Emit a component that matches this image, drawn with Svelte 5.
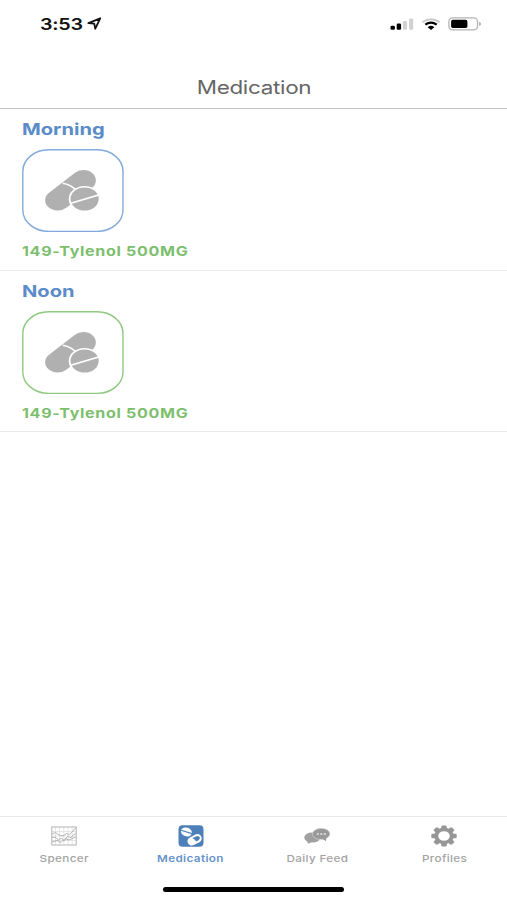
<script lang="ts">
  const medications = [
    { time: 'Morning', name: '149-Tylenol 500MG', status: 'due' },
    { time: 'Noon', name: '149-Tylenol 500MG', status: 'taken' }
  ];

  const tabs = [
    { id: 'spencer', label: 'Spencer' },
    { id: 'medication', label: 'Medication' },
    { id: 'feed', label: 'Daily Feed' },
    { id: 'profiles', label: 'Profiles' }
  ];

  let activeTab = $state('medication');
</script>

<div class="screen">
  <div class="status-bar">
    <div class="clock">
      <span class="time"><span class="wide">3:53</span></span>
      <svg class="location" viewBox="0 0 15 13">
        <path d="M1.4 6.2L13.2 1.3L8.3 11.7L7.2 6.6Z" fill="none" stroke="#111" stroke-width="1.8" stroke-linejoin="round" />
      </svg>
    </div>
    <div class="indicators">
      <svg class="signal" viewBox="0 0 24 12">
        <rect x="0.5" y="7.7" width="4.4" height="4.1" rx="1.3" fill="#000" />
        <rect x="6.7" y="5.5" width="4.4" height="6.3" rx="1.3" fill="#000" />
        <rect x="12.9" y="3" width="4.2" height="8.8" rx="1.2" fill="#d2d2d2" />
        <rect x="19" y="0.6" width="4.2" height="11.2" rx="1.2" fill="#d2d2d2" />
      </svg>
      <svg class="wifi" viewBox="0 0 20 12">
        <path d="M1.4 4.3Q10 -1.9 18.6 4.3" fill="none" stroke="#ccc" stroke-width="2" />
        <path d="M4.3 6.7Q10 2.4 15.7 6.7" fill="none" stroke="#000" stroke-width="2.2" />
        <path d="M6.7 9.2Q10 6.5 13.3 9.2L10 11.9Z" fill="#000" />
      </svg>
      <svg class="battery" viewBox="0 0 34 14">
        <rect x="0.9" y="0.9" width="28.6" height="12" rx="3.6" fill="none" stroke="#b4b4b4" stroke-width="1.3" />
        <rect x="3.1" y="2.7" width="16.3" height="8.4" rx="1.8" fill="#000" />
        <path d="M31.2 4.8Q33 5.6 33 6.9Q33 8.2 31.2 9Z" fill="#aaa" />
      </svg>
    </div>
  </div>

  <header class="header">
    <h1><span class="wide">Medication</span></h1>
  </header>

  <main class="content">
    {#each medications as med}
      <section class="slot">
        <h2><span class="wide">{med.time}</span></h2>
        <div class="pill-card">
          <svg class="outline" class:taken={med.status === 'taken'} viewBox="0 0 102 83">
            <rect x="0.8" y="0.8" width="100.2" height="81.6" rx="26" ry="21.5" />
          </svg>
          <svg class="pills" viewBox="0 0 44.3 41" preserveAspectRatio="none">
            <path d="M10.4 30.2L31.4 10.4" stroke="#b0b0b0" stroke-width="20.6" stroke-linecap="round" />
            <path d="M14.5 13.2Q22.5 14.6 27 22.5" fill="none" stroke="#fff" stroke-width="1.5" />
            <circle cx="32.5" cy="29" r="12.3" fill="#b0b0b0" stroke="#fff" stroke-width="1.5" />
            <path d="M20.5 33.5L45 24.6" stroke="#fff" stroke-width="1.5" />
          </svg>
        </div>
        <p><span class="wide">{med.name}</span></p>
      </section>
    {/each}
  </main>

  <nav class="tab-bar">
    {#each tabs as tab}
      <button class="tab {tab.id}" class:active={activeTab === tab.id} onclick={() => (activeTab = tab.id)}>
        {#if tab.id === 'spencer'}
          <svg class="tab-icon" viewBox="0 0 26 22">
            <path d="M4.5 2V20M8.5 2V20M12.8 2V20M17 2V20M21.2 2V20M1 6.5H25M1 11H25M1 15.5H25" stroke="#dedede" stroke-width="0.8" />
            <rect x="0.8" y="2" width="24.4" height="18" fill="none" stroke="#b4b4b4" stroke-width="1" />
            <path d="M1 9L4.5 7.5L8 10L12 11L15.5 8.5L18.5 9.5L21 7L24.8 2.8M1 12.5L4 12L7.5 15L10.5 13L13 16L16.5 11.5L20 12.5L24.8 8M1 17L6 15.5L10 17.5L14 13.5L18 15L24.8 12" fill="none" stroke="#acacac" stroke-width="0.9" />
          </svg>
        {:else if tab.id === 'medication'}
          <svg class="tab-icon" viewBox="0 0 26 22">
            <rect x="0.5" y="0.3" width="25" height="21.4" rx="4" fill="#4d7fb8" />
            <ellipse cx="8.4" cy="6.9" rx="5.7" ry="4.3" transform="rotate(20 8.4 6.9)" fill="#fff" />
            <path d="M3 5.2L14 8.6" stroke="#4d7fb8" stroke-width="1.1" />
            <path d="M13.8 16.3L19.4 13.4" stroke="#fff" stroke-width="8.6" stroke-linecap="round" />
            <path d="M14.6 13.2Q17 11 19.8 10.9Q22.2 11.2 21.9 13.4Q21.3 15.3 18.2 16.5Q17.2 14.5 14.6 13.2Z" fill="#4d7fb8" />
          </svg>
        {:else if tab.id === 'feed'}
          <svg class="tab-icon" viewBox="0 0 26 22">
            <ellipse cx="8.3" cy="12.6" rx="8" ry="5" fill="#a0a0a0" />
            <path d="M3.2 15.5L4 18.8L8 17Z" fill="#a0a0a0" />
            <ellipse cx="17.2" cy="8.9" rx="8.8" ry="5.6" fill="#999" stroke="#ddd" stroke-width="0.6" />
            <path d="M18.5 14L22 16.3L22.3 12.5Z" fill="#999" />
            <path d="M12.8 9H14.8M16.3 9H18.3M19.8 9H21.8" stroke="#e8e8e8" stroke-width="1.6" />
          </svg>
        {:else}
          <svg class="tab-icon" viewBox="-13 -11 26 22">
            <g transform="scale(1.2 1)">
              {#each [0, 45, 90, 135] as angle}
                <rect x="-2.3" y="-10.6" width="4.6" height="21.2" rx="1.3" transform="rotate({angle})" fill="#969696" />
              {/each}
              <circle r="8.2" fill="#969696" />
              <circle r="4.8" fill="#fff" />
            </g>
          </svg>
        {/if}
        <span class="wide">{tab.label}</span>
      </button>
    {/each}
  </nav>

  <div class="home-area">
    <div class="home-indicator"></div>
  </div>
</div>

<style>
  :global(body) {
    margin: 0;
    background: #fff;
  }

  .screen {
    width: 507px;
    height: 900px;
    display: flex;
    flex-direction: column;
    background: #fff;
    font-family: Inter, "Liberation Sans", sans-serif;
    overflow: hidden;
  }

  .screen * {
    box-sizing: border-box;
  }

  .wide {
    display: inline-block;
    white-space: nowrap;
    transform: scaleX(1.22);
    transform-origin: left center;
  }

  .status-bar {
    display: flex;
    justify-content: space-between;
    height: 48px;
    padding: 0 25px 0 40px;
  }

  .clock,
  .indicators {
    display: flex;
    align-items: center;
    height: 47px;
  }

  .time {
    width: 47px;
    font-size: 16.2px;
    letter-spacing: -0.2px;
    font-weight: 600;
    color: #111;
  }

  .location {
    width: 15px;
    height: 13px;
  }

  .signal {
    width: 24px;
    height: 12px;
    margin-right: 7px;
  }

  .wifi {
    width: 20px;
    height: 12px;
    margin-right: 7px;
  }

  .battery {
    width: 34px;
    height: 14px;
  }

  .header {
    flex: none;
    display: flex;
    align-items: center;
    justify-content: center;
    height: 61px;
    padding-top: 18px;
    border-bottom: 1px solid #c4c4c4;
  }

  h1 {
    margin: 0;
    font-size: 18.4px;
    line-height: 24px;
    letter-spacing: -0.25px;
    font-weight: 400;
    color: #666;
  }

  h1 .wide {
    transform-origin: center;
  }

  .content {
    flex: 1;
  }

  .slot {
    height: 161.6px;
    padding: 9px 22px 0;
    border-bottom: 1px solid #ebebeb;
  }

  h2 {
    margin: 0;
    height: 31px;
    font-size: 16.5px;
    line-height: 22px;
    font-weight: 700;
    color: #5b8cc9;
  }

  .pill-card {
    display: grid;
    place-items: center;
    width: 102px;
    height: 83px;
  }

  .pill-card svg {
    grid-area: 1 / 1;
  }

  .outline {
    width: 102px;
    height: 83px;
    fill: none;
    stroke: #82aadb;
    stroke-width: 1.4px;
  }

  .outline.taken {
    stroke: #8fc981;
  }

  .pills {
    width: 54px;
    height: 41px;
    margin-right: 2px;
  }

  p {
    margin: 9px 0 0;
    font-size: 13.2px;
    line-height: 20px;
    letter-spacing: 0.55px;
    font-weight: 700;
    color: #7dbf6e;
  }

  .tab-bar {
    flex: none;
    display: flex;
    height: 57px;
    border-top: 1px solid #e9e9e9;
  }

  .tab {
    flex: 1;
    display: flex;
    flex-direction: column;
    align-items: center;
    padding: 8px 0 0 1px;
    border: 0;
    background: none;
    font-family: inherit;
    font-size: 9.6px;
    line-height: 15px;
    letter-spacing: 0.3px;
    font-weight: 500;
    color: #a3a3a3;
  }

  .tab.active {
    color: #6793c9;
    font-weight: 600;
  }

  .tab-icon {
    flex: none;
    width: 26px;
    height: 22px;
    margin-bottom: 4px;
  }

  .tab .wide {
    transform-origin: center;
  }

  .home-area {
    flex: none;
    display: flex;
    justify-content: center;
    height: 27px;
    padding-top: 14px;
  }

  .home-indicator {
    width: 181px;
    height: 5px;
    border-radius: 3px;
    background: #000;
  }
</style>
